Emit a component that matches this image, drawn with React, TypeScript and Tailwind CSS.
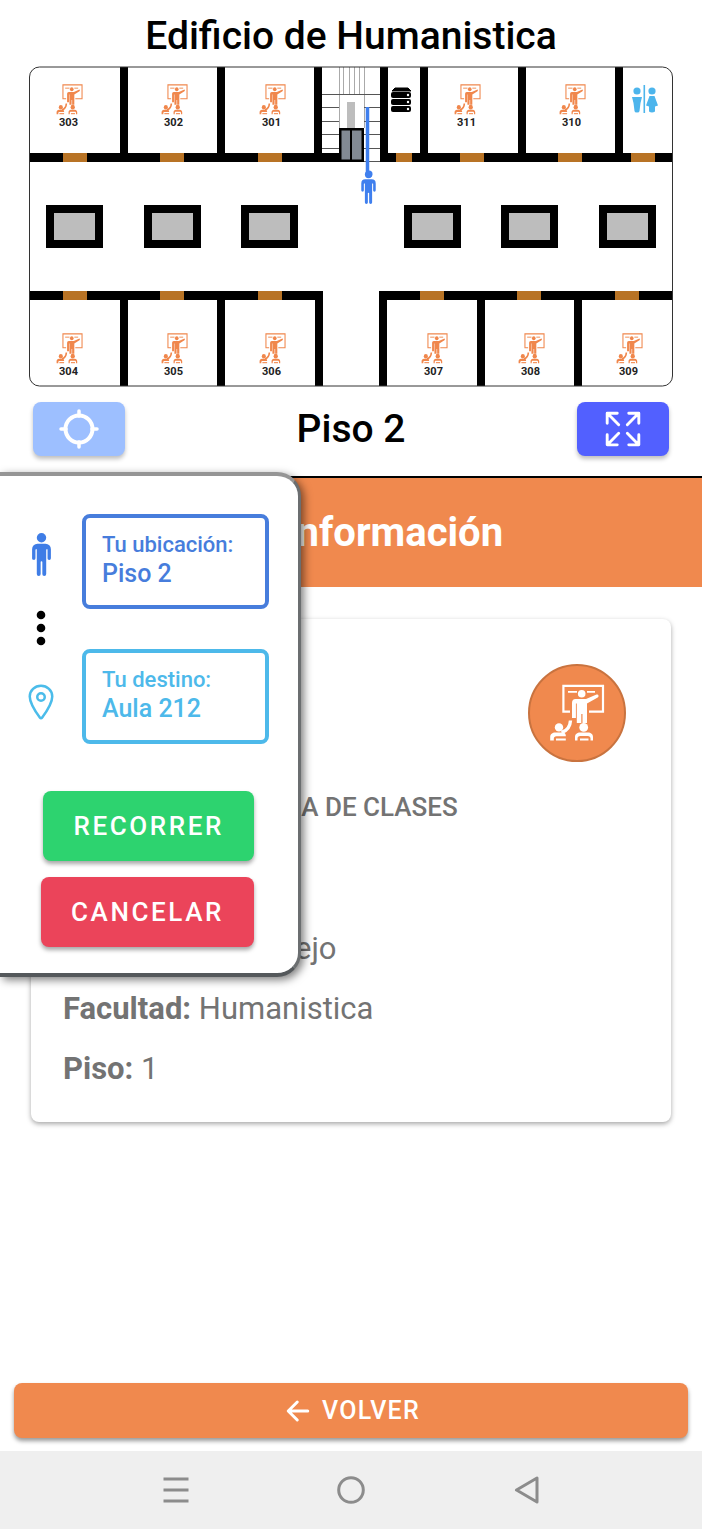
import type { ReactNode } from "react";
import { IoArrowBack, IoExpandOutline, IoLocationOutline, IoMan } from "react-icons/io5";

const WALL = 8;

type Room = { name: string; x: number; y: number };

const rooms: Room[] = [
  { name: "303", x: 27, y: 18 },
  { name: "302", x: 132, y: 18 },
  { name: "301", x: 230, y: 18 },
  { name: "311", x: 425, y: 18 },
  { name: "310", x: 530, y: 18 },
  { name: "304", x: 27, y: 267 },
  { name: "305", x: 132, y: 267 },
  { name: "306", x: 230, y: 267 },
  { name: "307", x: 392, y: 267 },
  { name: "308", x: 489, y: 267 },
  { name: "309", x: 587, y: 267 },
];

const topWalls = [91, 188, 285, 351, 391, 489, 586];
const bottomWalls = [91, 188, 286, 350, 448, 545];
const topDoors = [34, 131, 229, 431, 529, 602];
const bottomDoors = [34, 131, 229, 391, 488, 586];
const pillars = [17, 115, 212, 375, 472, 570];

function ClassIcon(props: {
  x?: number;
  y?: number;
  width?: number;
  height?: number;
  color?: string;
  className?: string;
}) {
  const { color = "#fff", ...rest } = props;
  return (
    <svg viewBox="0 0 56 58" preserveAspectRatio="none" fill={color} stroke="none" aria-hidden="true" {...rest}>
      <path d="M21 27.600H14.400V1.800H54V27.600H40" fill="none" stroke={color} strokeWidth="2.200" />
      <path d="M19 7.800h9M38 7.800h8" fill="none" stroke={color} strokeWidth="1.800" />
      <circle cx="32.700" cy="9.800" r="3.800" />
      <path d="M26.500 15H37l10.500-4.400c2-.8 2.800 1.800 1.200 2.900L38 19.500V39h-4.500V30h-1.200V39h-4.500V19.500h-.9V34H23V19c0-2.500 1.300-4 3.500-4z" />
      <path d="M21.500 36.500q-.5 9.500-9 12" fill="none" stroke={color} strokeWidth="3.400" />
      <circle cx="10" cy="43.400" r="4.200" />
      <path d="M1.200 56.500v-3.500c0-3 2.300-4.600 5-4.600h7.300c2 0 3.300 1.200 3.300 3v.8H7.500c-1.800 0-2.700 1-2.700 2.500v1.800z" />
      <path d="M7 56.500v-2h9.800v2z" />
      <circle cx="34.700" cy="43.400" r="4.400" />
      <path d="M26 56.500v-3.500c0-3 2.300-4.600 5-4.600h8c2.800 0 5 1.600 5 4.600v3.500h-2.500v-2c0-1.600-1-2.500-2.700-2.500h-7.600c-1.800 0-2.700 1-2.700 2.500v2z" />
      <path d="M31 56.500v-2h8.500v2z" />
    </svg>
  );
}

function LocateIcon() {
  return (
    <svg viewBox="0 0 40 40" className="h-10 w-10" fill="none" stroke="currentColor" strokeLinecap="round" aria-hidden="true">
      <circle cx="20" cy="20" r="13.500" strokeWidth="4" />
      <path d="M20 2v5M20 33v5M2 20h5M33 20h5" strokeWidth="3.500" />
    </svg>
  );
}

function ServerIcon() {
  return (
    <g>
      <path d="M366 22h13l3 3h-19z" stroke="#000" strokeLinejoin="round" />
      {[26, 33, 40].map((y) => (
        <g key={y}>
          <rect x="362" y={y} width="20" height="6" rx="2" />
          <circle cx="379" cy={y + 3} r="1.200" fill="#fff" />
        </g>
      ))}
    </g>
  );
}

function RestroomIcon() {
  return (
    <g fill="#4db5ec">
      <circle cx="608" cy="25" r="3.600" />
      <path d="M603 31h10l-1.500 6-1 8q0 1.500-2.500 1.500t-2.500-1.500l-1-8z" />
      <rect x="614.500" y="19" width="1.600" height="28" />
      <circle cx="623" cy="25" r="3.600" />
      <path d="M620.500 30h5l3.500 9.500-3 1v5q-3 2-6 0v-5l-3-1z" />
    </g>
  );
}

function FloorPlan() {
  return (
    <svg viewBox="0 0 644 321" className="block w-full" role="img" aria-label="Plano del piso 2">
      <defs>
        <clipPath id="plan">
          <rect x="1" y="1" width="642" height="319" rx="9" />
        </clipPath>
      </defs>
      <g clipPath="url(#plan)">
        <rect x="0" y="87" width="310" height="9" />
        <rect x="351" y="87" width="293" height="9" />
        <rect x="0" y="225" width="294" height="9" />
        <rect x="350" y="225" width="294" height="9" />
        {topWalls.map((x) => (
          <rect key={x} x={x} y="0" width={WALL} height="96" />
        ))}
        {bottomWalls.map((x) => (
          <rect key={x} x={x} y="225" width={WALL} height="96" />
        ))}
        {topDoors.map((x) => (
          <rect key={x} x={x} y="87" width="24" height="9" fill="#b87325" />
        ))}
        <rect x="367" y="87" width="16" height="9" fill="#b87325" />
        {bottomDoors.map((x) => (
          <rect key={x} x={x} y="225" width="24" height="9" fill="#b87325" />
        ))}
        {pillars.map((x) => (
          <g key={x}>
            <rect x={x} y="139" width="57" height="43" />
            <rect x={x + 8} y="147" width="41" height="27" fill="#bdbdbd" />
          </g>
        ))}
      </g>
      <g fill="none">
        <path d="M310.500 1v61M314.500 1v27M320.500 1v27M325.500 1v27M330.500 1v27M335.500 1v61" stroke="#aaa" />
        <path
          d="M293 28.500h58M293 41.500h17M335 41.500h16M293 55.500h17M335 55.500h16M293 68.500h17M335 68.500h16M293 82.500h17M335 82.500h16M335 95.500h16"
          stroke="#555"
        />
      </g>
      <rect x="318" y="36" width="8" height="26" fill="#bdbdbd" />
      <rect x="310" y="62" width="25" height="34" />
      <path d="M312.500 64.500h8.500v29h-8.500zM323 64.500h9.500v29H323z" fill="#828a94" />
      <path d="M338.500 41v66" stroke="#3f7fee" strokeWidth="3.500" />
      <circle cx="340" cy="108" r="3.500" fill="#3f7fee" />
      <IoMan x={323} y={105} size={33} color="#3f7fee" />
      <ServerIcon />
      <RestroomIcon />
      {rooms.map((r) => (
        <g key={r.name}>
          <ClassIcon x={r.x} y={r.y} width={27} height={31} color="#f0874c" />
          <text x={r.x + 12.5} y={r.y + 42} textAnchor="middle" fontSize="11" fontWeight="700" fill="#222">
            {r.name}
          </text>
        </g>
      ))}
      <rect x="0.500" y="1" width="643" height="319" rx="10" fill="none" stroke="#333" />
    </svg>
  );
}

function StopBox({ label, value, className }: { label: string; value: string; className: string }) {
  return (
    <div className={`h-[95px] w-[187px] rounded-lg border-4 px-4 pt-3 font-medium ${className}`}>
      <p className="text-[22px] leading-[29px]">{label}</p>
      <p className="text-[25px] leading-[29px]">{value}</p>
    </div>
  );
}

function Detail({ label, children }: { label: string; children: ReactNode }) {
  return (
    <p className="text-[31px] leading-[30px]">
      <strong className="font-bold">{label}</strong> {children}
    </p>
  );
}

function RoutePanel() {
  return (
    <aside className="absolute -top-1 left-0 w-[301px] rounded-r-3xl border-y-4 border-r-3 border-t-[#959595] border-r-[#6b6e70] border-b-[#54585b] bg-white pt-[38px] pb-[26px] shadow-[3px_3px_9px_rgba(0,0,0,0.5)]">
      <div className="flex items-start">
        <div className="flex w-[82px] flex-col items-center pt-[19px]">
          <IoMan className="h-[43px] w-[43px] text-[#3f7de6]" />
          <svg viewBox="0 0 10 36" className="mt-[34px] h-9 w-[10px]" aria-hidden="true">
            <circle cx="5" cy="5" r="4.300" />
            <circle cx="5" cy="18" r="4.300" />
            <circle cx="5" cy="31" r="4.300" />
          </svg>
          <IoLocationOutline className="mt-9 h-10 w-10 text-[#4bbcea]" />
        </div>
        <div className="flex flex-col gap-10">
          <StopBox label="Tu ubicación:" value="Piso 2" className="border-[#477ddc] text-[#477ddc]" />
          <StopBox label="Tu destino:" value="Aula 212" className="border-[#4db9ea] text-[#4db9ea]" />
        </div>
      </div>
      <div className="mt-[47px] flex flex-col items-end gap-4 pr-11 text-[26px] font-medium tracking-widest text-white">
        <button
          type="button"
          className="h-[70px] rounded-lg bg-[#2dd36f] px-[30px] shadow-[0_3px_4px_rgba(0,0,0,0.35)]"
        >
          RECORRER
        </button>
        <button
          type="button"
          className="h-[70px] rounded-lg bg-[#eb445a] px-[30px] shadow-[0_3px_4px_rgba(0,0,0,0.35)]"
        >
          CANCELAR
        </button>
      </div>
    </aside>
  );
}

export default function App() {
  return (
    <div className="flex min-h-screen flex-col bg-white font-['Roboto',sans-serif] text-black">
      <header className="px-[29px]">
        <h1 className="pt-[10px] pb-1 text-center text-[39px] leading-[52px] font-medium">Edificio de Humanistica</h1>
        <FloorPlan />
        <div className="mt-[15px] mb-5 flex items-center justify-between px-1">
          <button
            type="button"
            aria-label="Centrar ubicación"
            className="flex h-[54px] w-[92px] items-center justify-center rounded-lg bg-[#9dbfff] text-white shadow-[0_3px_4px_rgba(0,0,0,0.25)]"
          >
            <LocateIcon />
          </button>
          <h2 className="text-[39px] leading-[52px] font-medium">Piso 2</h2>
          <button
            type="button"
            aria-label="Ampliar plano"
            className="flex h-[54px] w-[92px] items-center justify-center rounded-lg bg-[#5260ff] text-white shadow-[0_3px_4px_rgba(0,0,0,0.25)]"
          >
            <IoExpandOutline className="h-[46px] w-[46px]" />
          </button>
        </div>
      </header>

      <main className="relative flex flex-1 flex-col">
        <h2 className="border-t-2 border-black bg-[#f0894e] pl-[86px] text-center text-[40px] leading-[109px] font-bold text-white">
          Información
        </h2>
        <section className="mx-[31px] mt-8 rounded-lg px-8 pt-[45px] pb-[38px] text-[#737373] shadow-[0_2px_5px_rgba(0,0,0,0.35)]">
          <div className="flex justify-end pr-[13px]">
            <div className="flex h-[98px] w-[98px] items-center justify-center rounded-full border-2 border-[#c9733f] bg-[#f0894e]">
              <ClassIcon className="h-[58px] w-14" />
            </div>
          </div>
          <p className="mt-[30px] pl-[191px] text-[26px] leading-[30px] font-medium">SALA DE CLASES</p>
          <div className="mt-28 flex flex-col gap-[30px]">
            <Detail label="Conjunto:">Complejo</Detail>
            <Detail label="Facultad:">Humanistica</Detail>
            <Detail label="Piso:">1</Detail>
          </div>
        </section>
        <div className="mt-auto px-[14px] pb-[13px]">
          <button
            type="button"
            className="flex h-[55px] w-full items-center justify-center gap-2 rounded-lg bg-[#f0894e] text-[25px] font-medium tracking-wider text-white shadow-[0_3px_4px_rgba(0,0,0,0.4)]"
          >
            <IoArrowBack className="h-8 w-8" />
            VOLVER
          </button>
        </div>
        <RoutePanel />
      </main>

      <nav className="grid h-[78px] grid-cols-3 place-items-center bg-[#efefef] px-[12.5%] text-[#8c8c8c]">
        <button type="button" aria-label="Recientes">
          <svg viewBox="0 0 28 28" className="h-7 w-7" fill="none" stroke="currentColor" strokeWidth="3">
            <path d="M1.500 3h25M1.500 14h25M1.500 25h25" />
          </svg>
        </button>
        <button type="button" aria-label="Inicio">
          <svg viewBox="0 0 28 28" className="h-7 w-7" fill="none" stroke="currentColor" strokeWidth="3">
            <circle cx="14" cy="14" r="12.300" />
          </svg>
        </button>
        <button type="button" aria-label="Atrás">
          <svg
            viewBox="0 0 28 28"
            className="h-7 w-7"
            fill="none"
            stroke="currentColor"
            strokeWidth="3"
            strokeLinejoin="round"
          >
            <path d="M24 2v24L3.500 14z" />
          </svg>
        </button>
      </nav>
    </div>
  );
}
